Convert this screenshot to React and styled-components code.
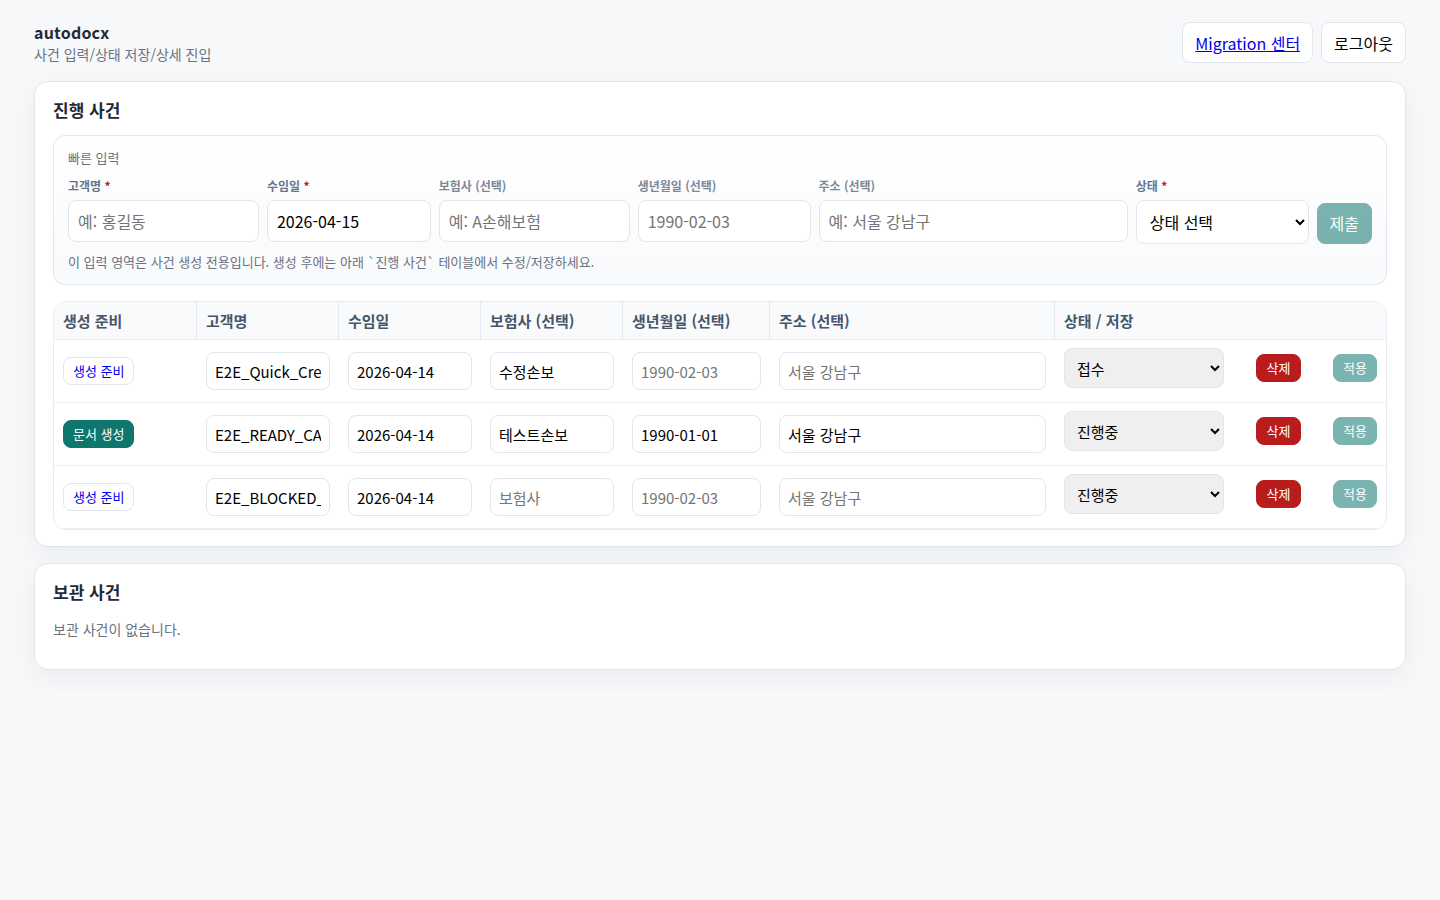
import React from 'react';
import styled, { createGlobalStyle, css } from 'styled-components';

const STATUSES = ['접수', '진행중', '완료'];

const columns = [
  { label: '생성 준비', width: 143 },
  { label: '고객명', width: 142 },
  { label: '수임일', width: 142 },
  { label: '보험사 (선택)', width: 142 },
  { label: '생년월일 (선택)', width: 147 },
  { label: '주소 (선택)', width: 285 },
  { label: '상태 / 저장', width: 331 },
];

const TABLE_WIDTH = columns.reduce((sum, column) => sum + column.width, 0);

const quickFields = [
  { id: 'client', label: '고객명', required: true, placeholder: '예: 홍길동' },
  { id: 'accepted', label: '수임일', required: true, value: '2026-04-15' },
  { id: 'insurer', label: '보험사 (선택)', placeholder: '예: A손해보험' },
  { id: 'birth', label: '생년월일 (선택)', placeholder: '1990-02-03' },
  { id: 'address', label: '주소 (선택)', placeholder: '예: 서울 강남구' },
];

const cases = [
  { id: 1, ready: false, client: 'E2E_Quick_Create', accepted: '2026-04-14', insurer: '수정손보', birth: '', address: '', status: '접수' },
  { id: 2, ready: true, client: 'E2E_READY_CASE', accepted: '2026-04-14', insurer: '테스트손보', birth: '1990-01-01', address: '서울 강남구', status: '진행중' },
  { id: 3, ready: false, client: 'E2E_BLOCKED_CASE', accepted: '2026-04-14', insurer: '', birth: '', address: '', status: '진행중' },
];

const cellInputs = [
  { key: 'client', label: '고객명', placeholder: '고객명' },
  { key: 'accepted', label: '수임일', placeholder: '2026-04-14' },
  { key: 'insurer', label: '보험사', placeholder: '보험사' },
  { key: 'birth', label: '생년월일', placeholder: '1990-02-03' },
  { key: 'address', label: '주소', placeholder: '서울 강남구' },
];

function QuickForm() {
  return (
    <QuickBox onSubmit={(e) => e.preventDefault()}>
      <QuickTitle>빠른 입력</QuickTitle>
      <QuickGrid>
        {quickFields.map((field) => (
          <Field key={field.id}>
            <Label htmlFor={field.id} $required={field.required}>
              {field.label}{field.required && <Star> *</Star>}
            </Label>
            <Input id={field.id} defaultValue={field.value} placeholder={field.placeholder} />
          </Field>
        ))}
        <Field>
          <Label htmlFor="status" $required>상태<Star> *</Star></Label>
          <Select id="status" defaultValue="">
            <option value="">상태 선택</option>
            {STATUSES.map((status) => <option key={status}>{status}</option>)}
          </Select>
        </Field>
        <SubmitButton type="submit">제출</SubmitButton>
      </QuickGrid>
      <Hint>이 입력 영역은 사건 생성 전용입니다. 생성 후에는 아래 `진행 사건` 테이블에서 수정/저장하세요.</Hint>
    </QuickBox>
  );
}

function CaseRow({ item }) {
  return (
    <tr>
      <Td>
        <DocLink href={`#case-${item.id}`} $ready={item.ready}>
          {item.ready ? '문서 생성' : '생성 준비'}
        </DocLink>
      </Td>
      {cellInputs.map(({ key, label, placeholder }) => (
        <Td key={key}>
          <CellInput aria-label={label} defaultValue={item[key]} placeholder={placeholder} />
        </Td>
      ))}
      <Td>
        <Actions>
          <CellSelect aria-label="상태" defaultValue={item.status}>
            {STATUSES.map((status) => <option key={status}>{status}</option>)}
          </CellSelect>
          <DeleteButton type="button">삭제</DeleteButton>
          <ApplyButton type="button">적용</ApplyButton>
        </Actions>
      </Td>
    </tr>
  );
}

export default function App() {
  return (
    <>
      <GlobalStyle />
      <Page lang="ko">
        <Header>
          <div>
            <Brand>autodocx</Brand>
            <Subtitle>사건 입력/상태 저장/상세 진입</Subtitle>
          </div>
          <Nav>
            <NavLink href="#migration">Migration 센터</NavLink>
            <NavButton type="button">로그아웃</NavButton>
          </Nav>
        </Header>
        <Panel>
          <PanelTitle>진행 사건</PanelTitle>
          <QuickForm />
          <TableWrap>
            <Table>
              <colgroup>
                {columns.map(({ label, width }) => (
                  <col key={label} style={{ width: `${(width / TABLE_WIDTH) * 100}%` }} />
                ))}
              </colgroup>
              <thead>
                <tr>{columns.map(({ label }) => <Th key={label}>{label}</Th>)}</tr>
              </thead>
              <tbody>
                {cases.map((item) => <CaseRow key={item.id} item={item} />)}
              </tbody>
            </Table>
          </TableWrap>
        </Panel>
        <Panel>
          <PanelTitle>보관 사건</PanelTitle>
          <Empty>보관 사건이 없습니다.</Empty>
        </Panel>
      </Page>
    </>
  );
}

const GlobalStyle = createGlobalStyle`
  * {
    box-sizing: border-box;
  }
  body {
    margin: 0;
    background: #f7f8fa;
    color: #1f2937;
    font-family: 'Noto Sans CJK KR', sans-serif;
    font-size: 16px;
  }
  button, input, select {
    font-family: inherit;
  }
`;

const Page = styled.main`
  display: flex;
  flex-direction: column;
  gap: 16px;
  padding: 22px 34px;
`;

const Header = styled.header`
  display: flex;
  justify-content: space-between;
  align-items: flex-start;
  margin-bottom: 1px;
`;

const Brand = styled.div`
  margin-bottom: 3px;
  font-weight: 700;
  line-height: 20px;
  letter-spacing: 0.2px;
`;

const Subtitle = styled.div`
  color: #6b7280;
  font-size: 14px;
  line-height: 19px;
`;

const Nav = styled.nav`
  display: flex;
  gap: 8px;
`;

const boxButton = css`
  padding: 8px 12px 7px;
  border: 1px solid #e1e5ec;
  border-radius: 8px;
  background: #fff;
  font-size: 16px;
  line-height: 24px;
`;

const NavLink = styled.a`
  ${boxButton}
  color: #0000ee;
`;

const NavButton = styled.button`
  ${boxButton}
  color: #000;
`;

const Panel = styled.section`
  padding: 16px 18px;
  border: 1px solid #e1e5ec;
  border-radius: 14px;
  background: #fff;
  box-shadow: 0 8px 24px rgba(15, 23, 42, 0.05);
`;

const PanelTitle = styled.h2`
  margin: 0 0 14px;
  font-size: 17px;
  font-weight: 700;
  line-height: 23px;
`;

const QuickBox = styled.form`
  padding: 12px 14px;
  border: 1px solid #e1e5ec;
  border-radius: 12px;
  background: linear-gradient(180deg, #fff, #f8fafc);
`;

const QuickTitle = styled.div`
  margin-bottom: 8px;
  color: #6b7280;
  font-size: 13px;
  line-height: 20px;
`;

const QuickGrid = styled.div`
  display: grid;
  grid-template-columns: 1.05fr 0.9fr 1.05fr 0.95fr 1.7fr 0.95fr auto;
  gap: 8px;
  align-items: start;
`;

const Field = styled.div`
  display: flex;
  flex-direction: column;
  gap: 4px;
  min-width: 0;
`;

const Label = styled.label`
  color: ${(props) => (props.$required ? '#64748b' : '#7c8798')};
  font-size: 12px;
  font-weight: 600;
  line-height: 20px;
`;

const Star = styled.span`
  color: #b91c1c;
`;

const Input = styled.input`
  width: 100%;
  height: 42px;
  padding: 8px 9px;
  border: 1px solid #e1e5ec;
  border-radius: 8px;
  background: #fff;
  color: #000;
  font-size: 16px;
`;

const Select = styled.select`
  width: 100%;
  height: 44px;
  padding: 8px 9px;
  border: 1px solid #e1e5ec;
  border-radius: 8px;
  background: #fff;
  color: #000;
  font-size: 16px;
`;

const SubmitButton = styled.button`
  align-self: end;
  padding: 8px 12px;
  border: 1px solid #0f766e;
  border-radius: 8px;
  background: #0f766e;
  color: #fff;
  font-size: 16px;
  line-height: 23px;
  opacity: 0.55;
`;

const Hint = styled.p`
  margin: 8px 0 0;
  color: #6b7280;
  font-size: 13px;
  line-height: 20px;
`;

const TableWrap = styled.div`
  margin-top: 16px;
  overflow: hidden;
  border: 1px solid #e8ecf2;
  border-radius: 12px;
`;

const Table = styled.table`
  width: 100%;
  table-layout: fixed;
  border-collapse: separate;
  border-spacing: 0;
`;

const Th = styled.th`
  height: 38px;
  padding: 8px 9px 7px;
  border-right: 1px solid #e2e8f0;
  border-bottom: 1px solid #e9edf3;
  background: #f8fafc;
  color: #475569;
  font-size: 15px;
  font-weight: 700;
  line-height: 22px;
  text-align: left;
  &:last-child {
    border-right: none;
  }
`;

const Td = styled.td`
  padding: 8px 9px;
  border-bottom: 1px solid #eceff4;
`;

const smallButton = css`
  padding: 4px 9px;
  border-radius: 8px;
  font-size: 13px;
  line-height: 18px;
`;

const DocLink = styled.a`
  ${smallButton}
  display: inline-block;
  border: 1px solid ${(props) => (props.$ready ? '#0f766e' : '#e1e5ec')};
  background: ${(props) => (props.$ready ? '#0f766e' : '#fff')};
  color: ${(props) => (props.$ready ? '#fff' : '#0000ee')};
  text-decoration: none;
`;

const CellInput = styled.input`
  width: 100%;
  height: 38px;
  padding: 8px;
  border: 1px solid #e1e5ec;
  border-radius: 8px;
  background: #fff;
  color: #000;
  font-size: 15px;
`;

const Actions = styled.div`
  display: flex;
  justify-content: space-between;
  align-items: center;
  padding-bottom: 6px;
`;

const CellSelect = styled.select`
  width: 160px;
  height: 40px;
  padding: 8px;
  border: 1px solid #e1e5ec;
  border-radius: 8px;
  background: #efefef;
  color: #000;
  font-size: 15px;
`;

const DeleteButton = styled.button`
  ${smallButton}
  padding: 4px 10px;
  border: 1px solid #b91c1c;
  background: #b91c1c;
  color: #fff;
`;

const ApplyButton = styled.button`
  ${smallButton}
  border: 1px solid #0f766e;
  background: #0f766e;
  color: #fff;
  opacity: 0.55;
`;

const Empty = styled.p`
  margin: 0;
  padding-bottom: 12px;
  color: #6b7280;
  font-size: 14px;
  line-height: 24px;
`;
